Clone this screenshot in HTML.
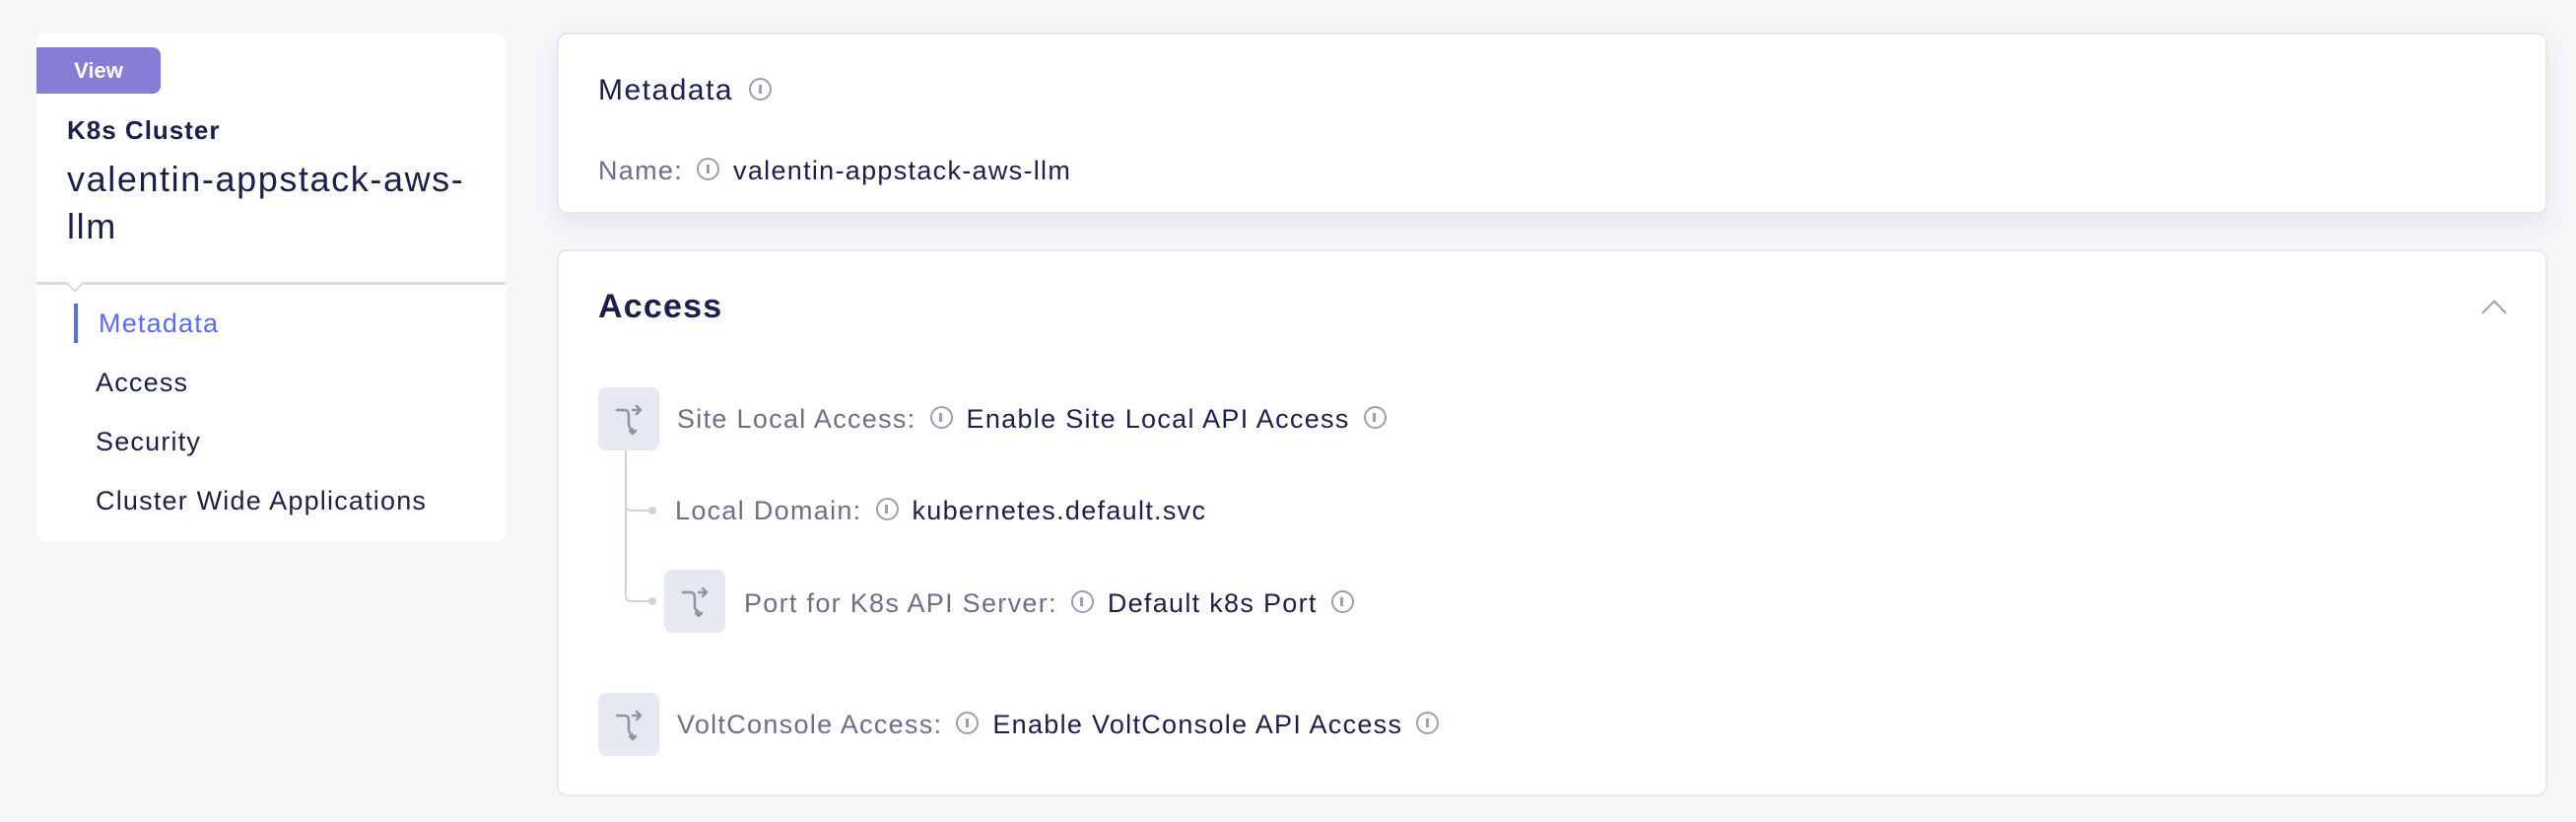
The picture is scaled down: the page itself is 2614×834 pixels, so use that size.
<!DOCTYPE html>
<html><head><meta charset="utf-8"><style>
*{box-sizing:border-box;margin:0;padding:0}
body{width:2614px;height:834px;background:#f5f6f8;font-family:"Liberation Sans",sans-serif;color:#1b1f4b;position:relative;overflow:hidden}
.abs{position:absolute;white-space:nowrap}
.card{position:absolute;background:#fff;border-radius:10px}
.lab{color:#6b7088}
.info{display:inline-block;width:23px;height:23px;border:2.5px solid #9a9fb2;border-radius:50%;position:relative;vertical-align:middle;margin:0 14px;top:-3px;letter-spacing:0}
.info:after{content:"";position:absolute;left:7.5px;top:5px;width:3px;height:9px;background:#9a9fb2}
.ib{position:absolute;width:62px;height:64px;background:#e6e8f2;border-radius:8px}
.row{position:absolute;font-size:27px;line-height:30px;white-space:nowrap;letter-spacing:1.3px}
</style></head><body>
<div class="card" style="left:37px;top:33px;width:476px;height:517px"></div>
<div class="abs" style="left:37px;top:48px;width:126px;height:47px;background:#877dd6;border-radius:0 8px 8px 0;color:#fff;font-weight:bold;font-size:22px;line-height:47px;text-align:center">View</div>
<div class="abs" style="left:68px;top:117px;font-size:26px;font-weight:bold;letter-spacing:1px">K8s Cluster</div>
<div class="abs" style="left:68px;top:158px;font-size:36px;line-height:48px;letter-spacing:1.6px">valentin-appstack-aws-<br>llm</div>
<div class="abs" style="left:37px;top:286px;width:476px;height:3px;background:#d6d9e6"></div>
<div class="abs" style="left:69px;top:280px;width:14px;height:14px;border-right:2px solid #d6d9e6;border-bottom:2px solid #d6d9e6;background:#fff;transform:rotate(45deg)"></div>
<div class="abs" style="left:75px;top:308px;width:4px;height:40px;background:#5a6cf0"></div>
<div class="abs" style="left:100px;top:313px;font-size:27px;color:#5a6cf0;letter-spacing:1.2px">Metadata</div>
<div class="abs" style="left:97px;top:373px;font-size:27px;letter-spacing:1.2px">Access</div>
<div class="abs" style="left:97px;top:433px;font-size:27px;letter-spacing:1.2px">Security</div>
<div class="abs" style="left:97px;top:493px;font-size:27px;letter-spacing:1.2px">Cluster Wide Applications</div>

<div class="card" style="left:565px;top:33px;width:2020px;height:184px;border:2px solid #e6e8f0;box-shadow:0 10px 24px rgba(40,50,90,0.08)"></div>
<div class="abs" style="left:607px;top:75px;font-size:30px;letter-spacing:1.5px">Metadata<span class="info" style="margin-left:16px"></span></div>
<div class="row" style="left:607px;top:158px"><span class="lab">Name:</span><span class="info"></span>valentin-appstack-aws-llm</div>

<div class="card" style="left:565px;top:253px;width:2020px;height:555px;border:2px solid #e6e8f0"></div>
<div class="abs" style="left:607px;top:292px;font-size:34px;font-weight:bold;letter-spacing:1.2px">Access</div>
<div class="abs" style="left:2522px;top:308px;width:18px;height:18px;border-left:2.5px solid #9a9fb2;border-top:2.5px solid #9a9fb2;transform:rotate(45deg)"></div>

<svg class="abs" style="left:0;top:0" width="2614" height="834"><g fill="none" stroke="#cfd3e0" stroke-width="2">
<path d="M635 457 V512 Q635 518 641 518 H660"/><path d="M635 512 V604 Q635 610 641 610 H660"/></g>
<circle cx="662" cy="518" r="4" fill="#cfd3e0"/><circle cx="662" cy="610" r="4" fill="#cfd3e0"/></svg>

<div class="ib" style="left:607px;top:393px"></div>
<div class="ib" style="left:674px;top:578px"></div>
<div class="ib" style="left:607px;top:703px"></div>
<svg class="abs" style="left:0;top:0" width="2614" height="834"><defs><g id="sw" fill="none" stroke="#8e93a6" stroke-width="2.5" stroke-linecap="round" stroke-linejoin="round"><path d="M-12 -8 H-4 Q0 -8 0 -2 V6 Q0 10 4 12"/><path d="M4 -8 H12 M8 -12 L12 -8 L8 -4"/><path d="M4 12 V16 M1 13 L4 16 L7 13"/></g></defs>
<use href="#sw" x="638" y="424"/><use href="#sw" x="705" y="609"/><use href="#sw" x="638" y="734"/></svg>

<div class="row" style="left:687px;top:410px"><span class="lab">Site Local Access:</span><span class="info"></span>Enable Site Local API Access<span class="info"></span></div>
<div class="row" style="left:685px;top:503px"><span class="lab">Local Domain:</span><span class="info"></span>kubernetes.default.svc</div>
<div class="row" style="left:755px;top:597px"><span class="lab">Port for K8s API Server:</span><span class="info"></span>Default k8s Port<span class="info"></span></div>
<div class="row" style="left:687px;top:720px"><span class="lab">VoltConsole Access:</span><span class="info"></span>Enable VoltConsole API Access<span class="info"></span></div>
</body></html>
